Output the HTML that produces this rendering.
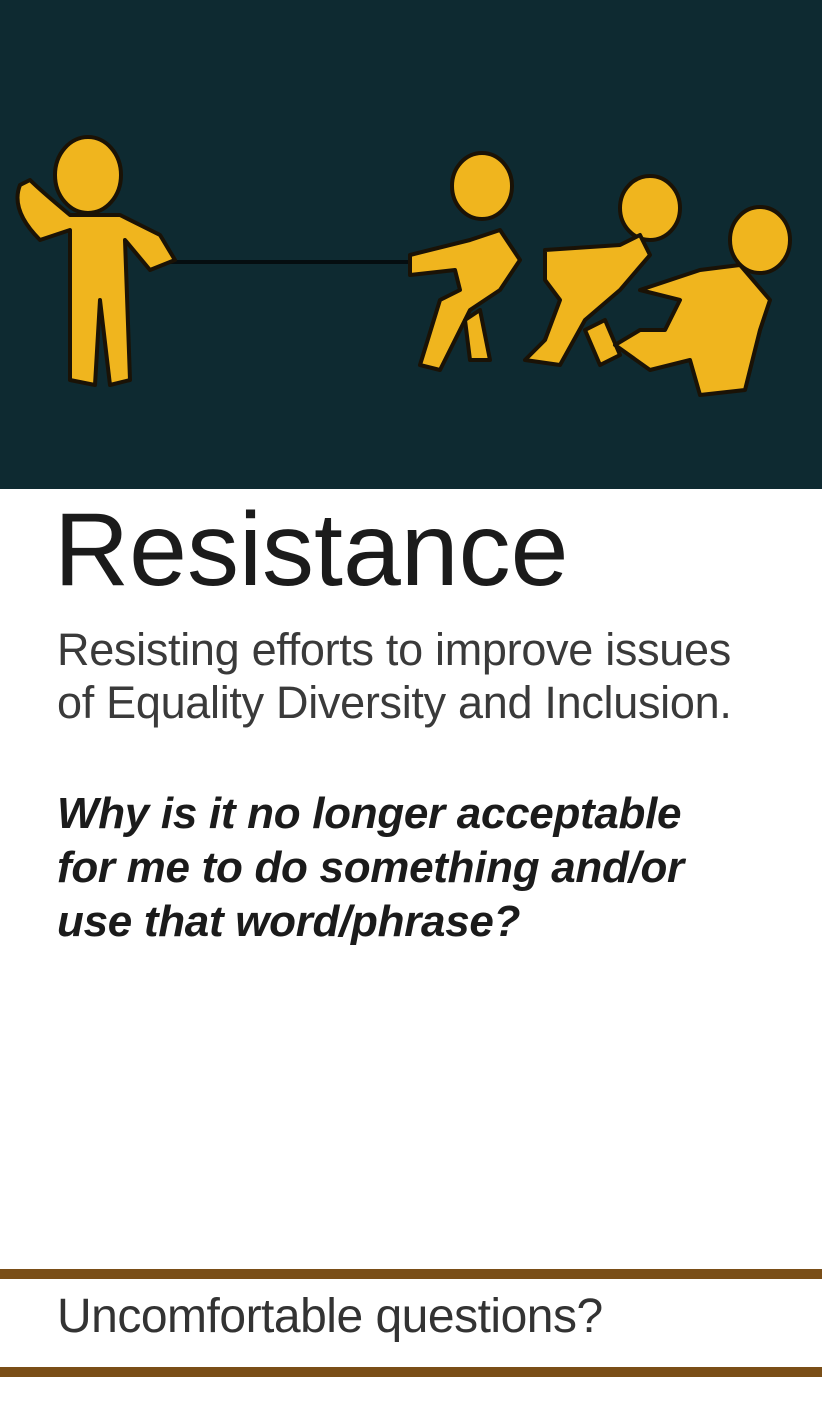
<!DOCTYPE html>
<html><head><meta charset="utf-8"><style>
body{margin:0;width:822px;height:1413px;background:#fff;position:relative;overflow:hidden;font-family:"Liberation Sans",sans-serif}
.top{position:absolute;left:0;top:0;width:822px;height:489px;background:#0e2a31}
h1{position:absolute;left:54px;top:490px;margin:0;font-size:104px;font-weight:normal;color:#1b1b1b;letter-spacing:0;line-height:120px}
.d{position:absolute;left:57px;top:623px;font-size:45px;line-height:53px;color:#3a3a3a;letter-spacing:-0.3px;white-space:nowrap}
.q{position:absolute;left:57px;top:787px;font-size:44px;line-height:54px;font-weight:bold;font-style:italic;color:#1b1b1b;letter-spacing:-0.3px;white-space:nowrap}
.bar{position:absolute;left:0;width:822px;height:10px;background:#7a4e17}
.f{position:absolute;left:57px;top:1292px;font-size:48px;line-height:50px;color:#333;letter-spacing:-0.5px}
</style></head><body>
<div class="top">
<svg width="822" height="489" viewBox="0 0 822 489">
<g fill="#f0b51e" stroke="#1a1206" stroke-width="4" stroke-linejoin="round">
<line x1="170" y1="262" x2="410" y2="262" stroke="#050d10" stroke-width="4"/>
<ellipse cx="88" cy="175" rx="33" ry="38"/>
<path d="M20 185 Q10 210 40 240 L70 230 L70 380 L95 385 L100 300 L110 385 L130 380 L125 240 L150 270 L175 260 L160 235 L120 215 L70 215 Q40 190 30 180 Z"/>
<ellipse cx="482" cy="186" rx="30" ry="33"/>
<path d="M410 255 L470 240 L500 230 L520 260 L500 290 L470 310 L440 370 L420 365 L440 300 L460 290 L455 270 L410 275 Z"/>
<path d="M465 320 L470 360 L490 360 L480 310 Z"/>
<ellipse cx="650" cy="208" rx="30" ry="32"/>
<path d="M545 250 L620 245 L640 235 L650 255 L620 290 L585 320 L560 365 L525 360 L545 340 L560 300 L545 280 Z"/>
<path d="M585 330 L600 365 L620 355 L605 320 Z"/>
<ellipse cx="760" cy="240" rx="30" ry="33"/>
<path d="M640 290 L700 270 L740 265 L770 300 L760 330 L745 390 L700 395 L690 360 L650 370 L615 345 L640 330 L665 330 L680 300 Z"/>
</g>
</svg>
</div>
<h1>Resistance</h1>
<div class="d">Resisting efforts to improve issues<br>of Equality Diversity and Inclusion.</div>
<div class="q">Why is it no longer acceptable<br>for me to do something and/or<br>use that word/phrase?</div>
<div class="bar" style="top:1269px"></div>
<div class="f">Uncomfortable questions?</div>
<div class="bar" style="top:1367px"></div>
</body></html>
